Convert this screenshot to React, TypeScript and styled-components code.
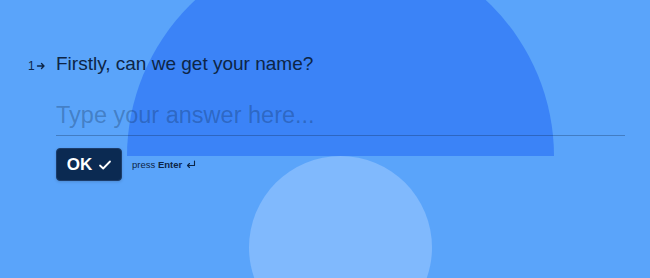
import React from "react";
import styled, { createGlobalStyle } from "styled-components";

const Global = createGlobalStyle`
  html, body { margin: 0; padding: 0; }
  body { font-family: "Liberation Sans", Arial, sans-serif; background: #5aa4fa; }
`;

const Stage = styled.div`
  position: relative;
  width: 650px;
  height: 278px;
  overflow: hidden;
  background: #5aa4fa;
`;

const Decor = styled.div`
  position: absolute;
  inset: 0;
  pointer-events: none;
`;

const HalfDisc = styled.div`
  position: absolute;
  left: 127px;
  top: 0;
  width: 427px;
  height: 156px;
  overflow: hidden;
  &::before {
    content: "";
    position: absolute;
    left: 0;
    top: -57px;
    width: 427px;
    height: 427px;
    border-radius: 50%;
    background: #3b83f7;
  }
`;

const Disc = styled.div`
  position: absolute;
  left: 249px;
  top: 156px;
  width: 183px;
  height: 183px;
  border-radius: 50%;
  background: #80b9fd;
`;

const Content = styled.div`
  position: relative;
  padding: 51px 25px 0 28px;
  display: flex;
  flex-direction: column;
`;

const QuestionRow = styled.div`
  display: flex;
  align-items: baseline;
`;

const Number = styled.div`
  width: 28px;
  display: flex;
  align-items: center;
  gap: 1px;
  font-size: 12px;
  color: #0d2546;
`;

const Question = styled.div`
  font-size: 19px;
  line-height: 25px;
  color: #0d2546;
`;

const Field = styled.div`
  margin-left: 28px;
  margin-top: 25px;
  border-bottom: 1px solid rgba(13, 37, 70, 0.3);
  padding-bottom: 6px;
  font-size: 23.5px;
  line-height: 28px;
  color: rgba(13, 37, 70, 0.3);
`;

const Actions = styled.div`
  margin-left: 28px;
  margin-top: 12px;
  display: flex;
  align-items: center;
  gap: 10px;
`;

const OkButton = styled.button`
  width: 66px;
  height: 33px;
  display: flex;
  align-items: center;
  justify-content: center;
  gap: 6px;
  padding: 0 0 0 1px;
  border: 1px solid #1c3d6b;
  border-radius: 4px;
  background: #0b2a52;
  color: #fff;
  font-family: "Liberation Sans", Arial, sans-serif;
  font-weight: 700;
  font-size: 17px;
  box-shadow: 0 1px 3px rgba(0, 0, 0, 0.15);
`;

const Hint = styled.div`
  font-size: 9.5px;
  color: #0d2546;
  display: flex;
  align-items: center;
  gap: 4px;
  b { font-weight: 700; }
`;

export default function App() {
  return (
    <>
      <Global />
      <Stage>
        <Decor>
          <HalfDisc />
          <Disc />
        </Decor>
        <Content>
          <QuestionRow>
            <Number>
              1
              <svg width="10" height="10" viewBox="0 0 10 10" fill="none" stroke="#0d2546" strokeWidth="1.4" strokeLinecap="round" strokeLinejoin="round">
                <path d="M1.5 5h6.5M5.5 2.5 8 5 5.5 7.5" />
              </svg>
            </Number>
            <Question>Firstly, can we get your name?</Question>
          </QuestionRow>
          <Field>Type your answer here...</Field>
          <Actions>
            <OkButton>
              OK
              <svg width="14" height="12" viewBox="0 0 14 12" fill="none" stroke="#fff" strokeWidth="1.8" strokeLinecap="round" strokeLinejoin="round">
                <path d="M2 6.5 5.2 9.5 12 2.5" />
              </svg>
            </OkButton>
            <Hint>
              <span>press <b>Enter</b></span>
              <svg width="10" height="9" viewBox="0 0 10 9" fill="none" stroke="#0d2546" strokeWidth="1.1" strokeLinecap="round" strokeLinejoin="round">
                <path d="M8.5 1v4.5H1.5M3.5 3.5 1.5 5.5 3.5 7.5" />
              </svg>
            </Hint>
          </Actions>
        </Content>
      </Stage>
    </>
  );
}
